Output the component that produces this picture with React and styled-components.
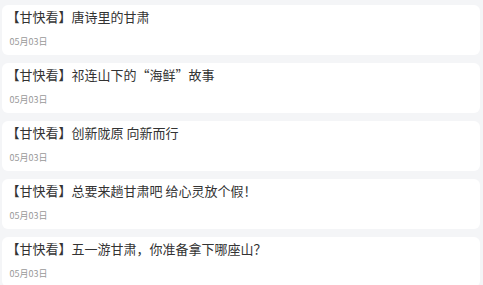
import React from 'react';
import styled, { createGlobalStyle } from 'styled-components';

const GlobalStyle = createGlobalStyle`
  html, body {
    margin: 0;
    padding: 0;
    background: #f4f5f7;
  }
  body {
    font-family: "Noto Sans CJK SC", "Noto Sans", sans-serif;
  }
`;

const items = [
  { title: '唐诗里的甘肃', date: '05月03日' },
  { title: '祁连山下的“海鲜”故事', date: '05月03日' },
  { title: '创新陇原 向新而行', date: '05月03日' },
  { title: '总要来趟甘肃吧 给心灵放个假！', date: '05月03日' },
  { title: '五一游甘肃，你准备拿下哪座山？', date: '05月03日' },
];

function App() {
  return (
    <>
      <GlobalStyle />
      <List>
        {items.map((item, i) => (
          <Card key={i}>
            <Title>
              <Tag>【甘快看】</Tag>
              <span>{item.title}</span>
            </Title>
            <DateText>{item.date}</DateText>
          </Card>
        ))}
      </List>
    </>
  );
}

export default App;

const List = styled.div`
  display: flex;
  flex-direction: column;
  gap: 8.5px;
  padding: 5px 3px 0 1.5px;
`;

const Card = styled.div`
  background: #fff;
  border-radius: 6px;
  height: 49.5px;
  box-sizing: border-box;
  padding: 4px 8px 0 5px;
  display: flex;
  flex-direction: column;
`;

const Title = styled.div`
  font-size: 13px;
  line-height: 15px;
  color: #333;
  white-space: nowrap;
`;

const Tag = styled.span`
  color: #333;
`;

const DateText = styled.div`
  margin-top: 11.5px;
  font-size: 9px;
  line-height: 12px;
  color: #999;
  padding-left: 3px;
`;
